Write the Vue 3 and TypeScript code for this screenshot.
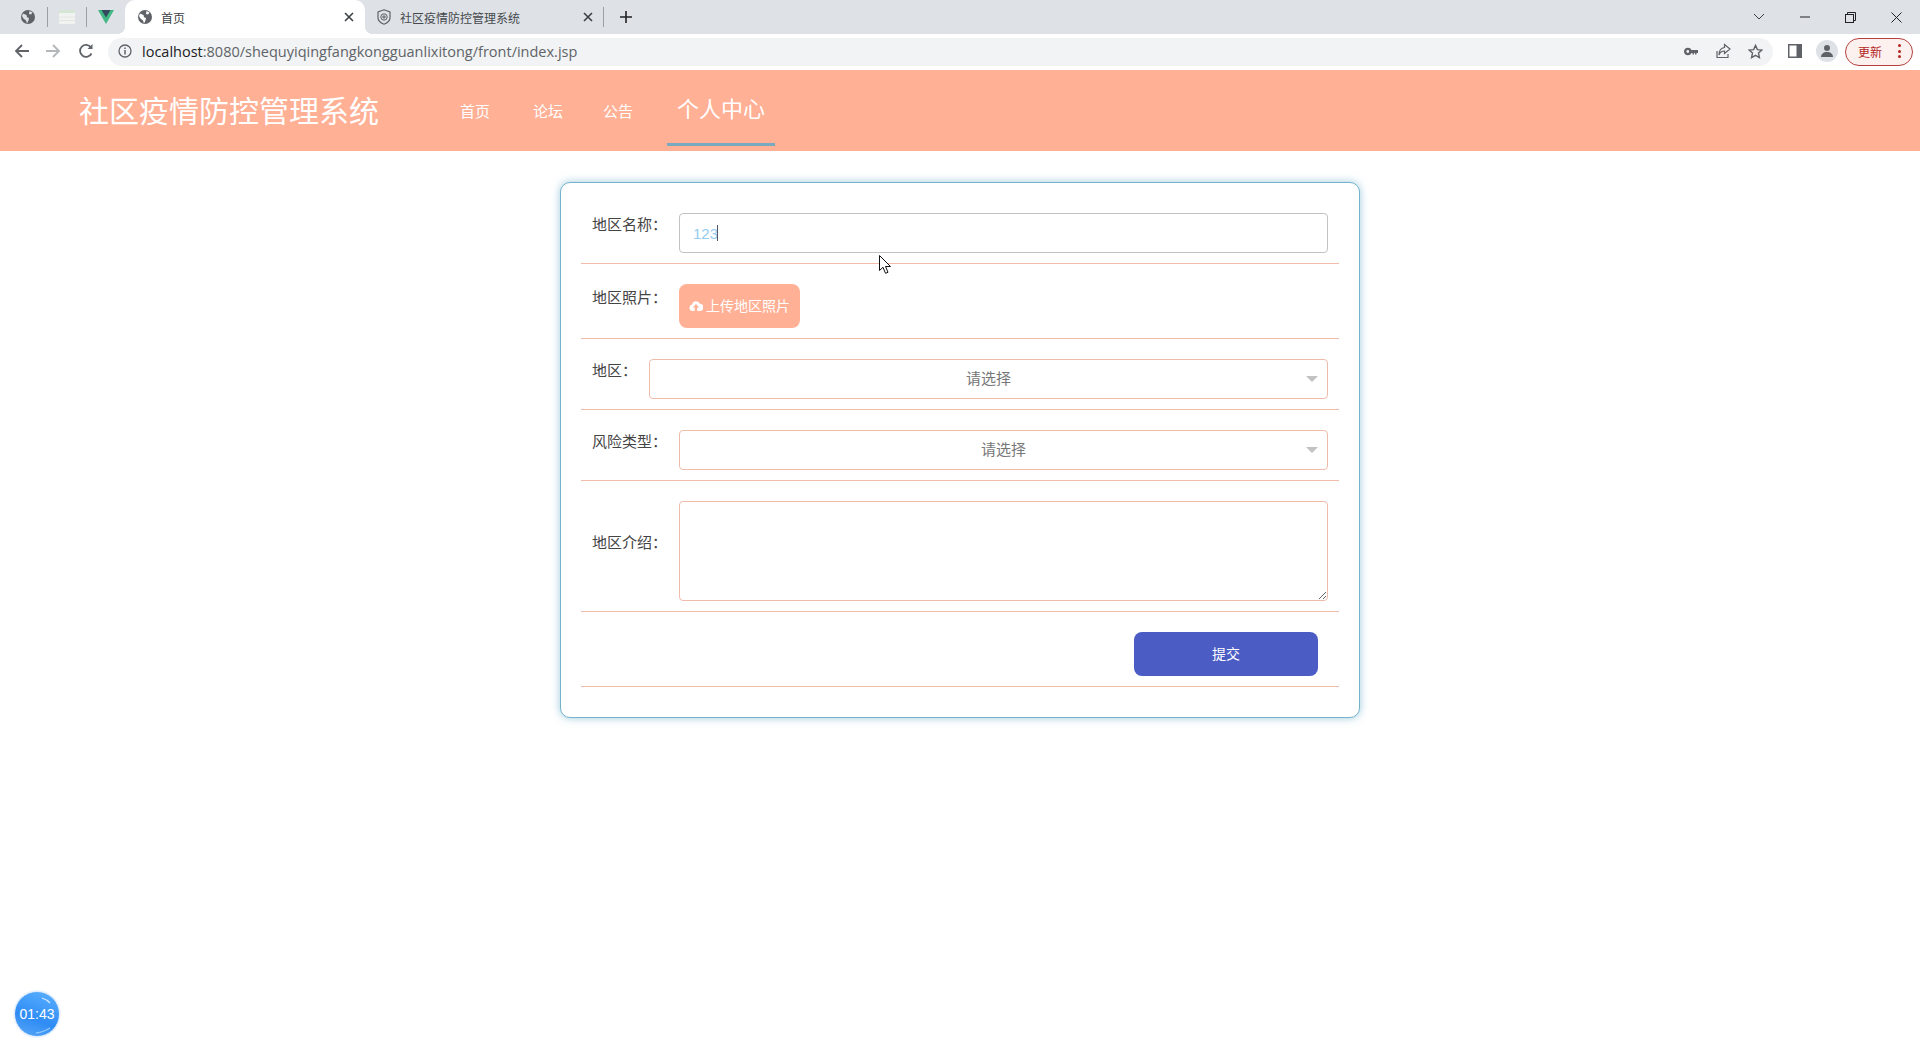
<script setup lang="ts">
import { ref } from 'vue'

const areaName = ref<string>('123')
const navItems: string[] = ['首页', '论坛', '公告']
const title = '社区疫情防控管理系统'
</script>

<template>
  <div class="page">
    <div class="tabstrip">
      <div class="pinned">
        <span class="pin">
          <svg width="16" height="16" viewBox="0 0 16 16"><circle cx="8" cy="8" r="7" fill="#5f6368"/><path d="M3 4.500 6.500 6l.5 2.200L9 9l-.5 2.500-1.500 3-1-3-2.600-2L2 7zM9.500 2l3 1.500L11 5.500 9 5z" fill="#dee1e6"/></svg>
        </span>
        <span class="sep"></span>
        <span class="pin">
          <svg width="16" height="14" viewBox="0 0 16 14"><rect width="16" height="14" fill="#f1f3f1"/><rect width="16" height="3" fill="#d6e6d6"/><path d="M0 7h16M0 10.500h16" stroke="#e3e6e3"/></svg>
        </span>
        <span class="sep"></span>
        <span class="pin">
          <svg width="16" height="14" viewBox="0 0 16 14"><path d="M0 0h16L8 14z" fill="#41b883"/><path d="M3.500 0h9L8 7.500z" fill="#34495e"/></svg>
        </span>
      </div>
      <div class="tab tab-active">
        <svg class="tab-icon" width="16" height="16" viewBox="0 0 16 16"><circle cx="8" cy="8" r="7" fill="#5f6368"/><path d="M3 4.500 6.500 6l.5 2.200L9 9l-.5 2.500-1.500 3-1-3-2.600-2L2 7zM9.500 2l3 1.500L11 5.500 9 5z" fill="#fff"/></svg>
        <span class="tab-title">首页</span>
        <svg class="tab-close" width="10" height="10" viewBox="0 0 10 10"><path d="M1 1l8 8M9 1l-8 8" stroke="#3c4043" stroke-width="1.600"/></svg>
      </div>
      <div class="tab tab-second">
        <svg class="tab-icon" width="14" height="16" viewBox="0 0 14 16" fill="none" stroke="#5f6368"><path d="M7 .8 13 3v6c0 3-3 5-6 6.200C4 14 1 12 1 9V3z" stroke-width="1.200"/><circle cx="7" cy="8" r="3.200"/><path d="M7 6v4M5 8h4"/></svg>
        <span class="tab-title tab-title-dim">{{ title }}</span>
        <svg class="tab-close" width="10" height="10" viewBox="0 0 10 10"><path d="M1 1l8 8M9 1l-8 8" stroke="#3c4043" stroke-width="1.600"/></svg>
      </div>
      <span class="sep sep-end"></span>
      <svg class="plus" width="12" height="12" viewBox="0 0 12 12"><path d="M6 0v12M0 6h12" stroke="#202124" stroke-width="1.600"/></svg>
      <div class="win-controls">
        <svg width="12" height="8" viewBox="0 0 12 8" fill="none"><path d="M1 1l5 5 5-5" stroke="#3c4043"/></svg>
        <svg width="10" height="2" viewBox="0 0 10 2"><path d="M0 1h10" stroke="#202124"/></svg>
        <svg width="11" height="11" viewBox="0 0 11 11" fill="none" stroke="#202124"><rect x=".5" y="2.500" width="8" height="8"/><path d="M2.500 2.500v-2h8v8h-2"/></svg>
        <svg width="11" height="11" viewBox="0 0 11 11"><path d="M.5.500l10 10M10.500.500l-10 10" stroke="#202124"/></svg>
      </div>
    </div>

    <div class="toolbar">
      <svg width="16" height="16" viewBox="0 0 16 16" fill="none" stroke="#5f6368" stroke-width="1.800"><path d="M15 8H2M8 2 2 8l6 6"/></svg>
      <svg class="forward" width="16" height="16" viewBox="0 0 16 16" fill="none" stroke="#b4b7ba" stroke-width="1.800"><path d="M1 8h13M8 2l6 6-6 6"/></svg>
      <svg class="reload" width="16" height="16" viewBox="0 0 16 16" fill="none" stroke="#5f6368" stroke-width="1.800"><path d="M13.500 10.500A6 6 0 1 1 13 4.500"/><path d="M14.500 1v5h-5" fill="#5f6368" stroke="none"/></svg>
      <div class="omnibox">
        <svg width="14" height="14" viewBox="0 0 14 14" fill="none" stroke="#5f6368"><circle cx="7" cy="7" r="6" stroke-width="1.300"/><path d="M7 6v4.500M7 3.500v1.500" stroke-width="1.500"/></svg>
        <span class="url"><span class="url-host">localhost</span>:8080/shequyiqingfangkongguanlixitong/front/index.jsp</span>
        <div class="omni-actions">
          <svg width="14" height="9" viewBox="0 0 14 9"><circle cx="3.800" cy="4.500" r="2.600" fill="none" stroke="#5f6368" stroke-width="2.400"/><path d="M6 3h8v3h-1.500v1.500h-1.500V6h-1v1.500H8.500V6H6z" fill="#5f6368"/></svg>
          <svg width="16" height="16" viewBox="0 0 16 16" fill="none" stroke="#5f6368" stroke-width="1.200"><path d="M2 8v6.500h11V11"/><path d="M9.500 1.500 15 6l-5.500 4.500V8C7 8 5 9 4 12c0-4.500 2-7 5.500-7.500z"/></svg>
          <svg width="15" height="15" viewBox="0 0 16 16" fill="none" stroke="#5f6368" stroke-width="1.500"><path d="M8 1.500l2 4.500 4.800.5-3.600 3.200 1 4.800L8 12.100l-4.200 2.400 1-4.800L1.200 6.500 6 6z"/></svg>
        </div>
      </div>
      <svg class="panel-icon" width="14" height="14" viewBox="0 0 14 14"><rect width="14" height="14" fill="#5f6368"/><rect x="1.500" y="1.500" width="7" height="11" fill="#fff"/></svg>
      <span class="avatar">
        <svg width="14" height="14" viewBox="0 0 14 14" fill="#5f6368"><circle cx="7" cy="4" r="3"/><path d="M1 13c0-3 2.500-5 6-5s6 2 6 5z"/></svg>
      </span>
      <div class="update">
        <span>更新</span>
        <span class="update-dots"><i></i><i></i><i></i></span>
      </div>
    </div>

    <header class="site-header">
      <div class="site-title">{{ title }}</div>
      <nav class="site-nav">
        <a v-for="item in navItems" :key="item" class="nav-item">{{ item }}</a>
        <a class="nav-item nav-active">个人中心</a>
      </nav>
    </header>

    <main class="content">
      <form class="card" @submit.prevent>
        <div class="row">
          <label class="label">地区名称：</label>
          <div class="control input-wrap">
            <input v-model="areaName" class="field field-focus" type="text" />
            <span class="caret"></span>
          </div>
        </div>
        <div class="row">
          <label class="label label-upload">地区照片：</label>
          <button type="button" class="upload">
            <svg width="14" height="11" viewBox="0 0 14 11"><path d="M3.500 11A3.300 3.300 0 0 1 3 4.500 4.200 4.200 0 0 1 11 3.800 3.600 3.600 0 0 1 10.800 11H8.200V7.500h2L7 4 3.800 7.500h2V11z" fill="#fff"/></svg>
            上传地区照片
          </button>
        </div>
        <div class="row">
          <label class="label">地区：</label>
          <div class="control select-wrap">
            <select class="field select"><option>请选择</option></select>
            <span class="arrow"></span>
          </div>
        </div>
        <div class="row">
          <label class="label">风险类型：</label>
          <div class="control select-wrap">
            <select class="field select"><option>请选择</option></select>
            <span class="arrow"></span>
          </div>
        </div>
        <div class="row">
          <label class="label label-area">地区介绍：</label>
          <textarea class="control field area"></textarea>
        </div>
        <div class="row row-submit">
          <button type="submit" class="submit">提交</button>
        </div>
      </form>
    </main>

    <svg class="cursor" width="13" height="20" viewBox="0 0 13 20"><path d="M.5.500v15l3.500-3.200 2.500 6 2.500-1-2.500-5.800h5z" fill="#fff" stroke="#111"/></svg>
    <div class="timer">
      <svg class="timer-shine" width="46" height="46" viewBox="0 0 46 46" fill="none"><path d="M28 7 Q33 8.500 36 12" stroke="#cfe6ff" stroke-width="1.300"/><path d="M22 42 Q30 41 36 37" stroke="#8cc8ff" stroke-width="1.500"/></svg>
      <span class="timer-text">01:43</span>
    </div>
  </div>
</template>

<style>
html, body { margin: 0; background: #fff; }
</style>

<style scoped>
.page {
  position: relative;
  height: 1040px;
  overflow: hidden;
  font-family: "Liberation Sans", "Noto Sans CJK SC", sans-serif;
  background: #fff;
}
.tabstrip {
  height: 34px;
  background: #dee1e6;
  display: flex;
  align-items: center;
  font-family: "Noto Sans CJK SC", sans-serif;
}
.pinned { width: 125px; display: flex; align-items: center; padding-left: 20px; box-sizing: border-box; }
.pin { width: 16px; height: 16px; display: flex; align-items: center; justify-content: center; }
.sep { width: 1px; height: 20px; background: #9aa0a6; margin: 0 11px; }
.tab {
  position: relative;
  width: 240px;
  height: 34px;
  box-sizing: border-box;
  padding: 0 12px;
  display: flex;
  align-items: center;
  font-size: 12px;
  color: #3c4043;
}
.tab-active { background: #fff; border-radius: 10px 10px 0 0; z-index: 1; padding-right: 11px; }
.tab-active::before, .tab-active::after {
  content: "";
  position: absolute;
  bottom: 0;
  width: 8px;
  height: 8px;
}
.tab-active::before { left: -8px; background: radial-gradient(circle at 0 0, transparent 8px, #fff 8px); }
.tab-active::after { right: -8px; background: radial-gradient(circle at 100% 0, transparent 8px, #fff 8px); }
.tab-icon { flex: none; margin-right: 8px; }
.tab-second .tab-icon { margin-right: 9px; }
.tab-title { flex: 1; color: #3c4043; }
.tab-title-dim { color: #45494d; }
.tab-close { flex: none; }
.sep-end { margin: 0 0 0 -2px; }
.plus { margin-left: 16px; }
.win-controls {
  margin-left: auto;
  display: flex;
  align-items: center;
  gap: 35px;
  padding-right: 18px;
}
.toolbar {
  height: 36px;
  background: #fff;
  display: flex;
  align-items: center;
  padding-left: 14px;
  padding-bottom: 2px;
  box-sizing: border-box;
}
.forward { margin-left: 15px; }
.reload { margin-left: 17px; }
.omnibox {
  margin-left: 14px;
  margin-top: 2px;
  width: 1665px;
  height: 28px;
  background: #f1f3f4;
  border-radius: 14px;
  display: flex;
  align-items: center;
  padding: 0 10px 2px;
  box-sizing: border-box;
}
.url {
  margin-left: 10px;
  font-family: "Open Sans", sans-serif;
  font-size: 14.5px;
  color: #5f6368;
  white-space: nowrap;
}
.url-host { color: #202124; }
.omni-actions { margin-left: auto; display: flex; align-items: center; gap: 17px; }
.panel-icon { margin-left: 15px; }
.avatar {
  margin-left: 14px;
  width: 22px;
  height: 22px;
  border-radius: 50%;
  background: #dee1e6;
  display: flex;
  align-items: center;
  justify-content: center;
}
.update {
  margin-left: 7px;
  margin-top: 2px;
  width: 68px;
  height: 28px;
  box-sizing: border-box;
  border: 1px solid #b3403c;
  border-radius: 14px;
  background: #fdf1f0;
  color: #b3261e;
  font-family: "Noto Sans CJK SC", sans-serif;
  font-size: 12px;
  display: flex;
  align-items: center;
  justify-content: space-between;
  padding: 0 11px 2px 12px;
}
.update-dots { display: flex; flex-direction: column; gap: 2.500px; }
.update-dots i { width: 3px; height: 3px; border-radius: 50%; background: #b3261e; display: block; }
.site-header {
  height: 81px;
  background: #ffb095;
  display: flex;
  align-items: center;
  padding-left: 79px;
  color: #fff;
  font-family: "Noto Sans CJK SC", sans-serif;
}
.site-title { font-size: 30px; width: 378px; padding-bottom: 4px; }
.site-nav { display: flex; align-items: center; height: 81px; }
.nav-item { font-size: 15px; }
.nav-item:nth-child(1) { margin-left: 3px; margin-right: 43px; }
.nav-item:nth-child(2) { margin-right: 40px; }
.nav-item:nth-child(3) { margin-right: 34px; }
.nav-active {
  font-size: 22px;
  padding: 0 10px;
  height: 76px;
  line-height: 74px;
  box-sizing: border-box;
  border-bottom: 3px solid #78a9c0;
  align-self: flex-start;
}
.content { display: flex; justify-content: center; padding-top: 31px; }
.card {
  width: 800px;
  box-sizing: border-box;
  border: 1px solid #75b3cd;
  border-radius: 10px;
  padding: 10px 20px 30px;
  background: #fff;
  box-shadow: 0 0 8px rgba(117, 179, 205, 0.7);
}
.row {
  display: flex;
  align-items: flex-start;
  padding: 20px 11px 10px;
  border-bottom: 1px solid #f2bcaa;
}
.label {
  flex: none;
  margin-right: 12px;
  font-size: 15px;
  line-height: 22px;
  color: #444;
  font-family: "Noto Sans CJK SC", sans-serif;
}
.label-upload { margin-top: 2px; }
.label-area { margin-top: 30px; }
.control { flex: 1; min-width: 0; position: relative; display: block; }
.field {
  width: 100%;
  height: 40px;
  box-sizing: border-box;
  display: block;
  border: 1px solid #f0bcaa;
  border-radius: 4px;
  background: #fff;
  outline: none;
  margin: 0;
}
.field-focus {
  border-color: #c2c2c2;
  padding: 0 13px;
  font-size: 15px;
  font-family: "Liberation Sans", sans-serif;
  color: #94cbf0;
}
.caret { position: absolute; left: 38px; top: 12px; width: 1px; height: 16px; background: #556; }
.select {
  appearance: none;
  -webkit-appearance: none;
  text-align: center;
  text-align-last: center;
  font-family: "Noto Sans CJK SC", sans-serif;
  font-size: 15px;
  color: #777;
  padding-bottom: 3px;
}
.arrow {
  position: absolute;
  right: 10px;
  top: 17px;
  width: 0;
  height: 0;
  border-left: 6px solid transparent;
  border-right: 6px solid transparent;
  border-top: 6px solid #c2c2c2;
}
.area { height: 100px; }
.upload {
  width: 121px;
  height: 44px;
  border: 0;
  padding: 0 0 2px;
  border-radius: 8px;
  background: #ffb095;
  color: #fff;
  font-family: "Noto Sans CJK SC", sans-serif;
  font-size: 14px;
  display: flex;
  align-items: center;
  justify-content: center;
  gap: 3px;
}
.row-submit { justify-content: flex-end; }
.submit {
  width: 184px;
  height: 44px;
  margin-right: 10px;
  border: 0;
  padding: 0 0 2px;
  border-radius: 8px;
  background: #4b5cc4;
  color: #fff;
  font-family: "Noto Sans CJK SC", sans-serif;
  font-size: 14px;
}
.cursor { position: absolute; left: 879px; top: 255px; }
.timer {
  position: absolute;
  left: 14px;
  top: 991px;
  width: 46px;
  height: 46px;
  box-sizing: border-box;
  border-radius: 50%;
  border: 1px solid #dcebfb;
  box-shadow: 0 0 0 1px #eef5fc;
  background: linear-gradient(200deg, #5cb2ff 0%, #2f8cf5 60%, #5aa8f5 100%);
  color: #fff;
  font-size: 14px;
  line-height: 44px;
  text-align: center;
  overflow: hidden;
}
.timer-shine { position: absolute; left: -1px; top: -1px; }
.timer-text { position: relative; }
</style>
